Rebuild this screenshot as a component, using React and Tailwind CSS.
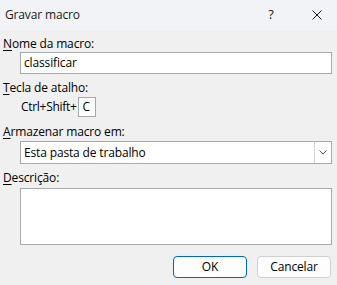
import React from 'react'

const Label = ({ first, rest, className = '' }) => (
  <div className={`pl-[3px] h-[16px] leading-[16px] text-[12px] text-[#000] ${className}`}>
    <span className="underline underline-offset-[2px]">{first}</span>{rest}
  </div>
)

const GravarMacro = () => {
  return (
    <div className="w-[337px] h-[285px] bg-[#f0f0f0] flex flex-col overflow-hidden [font-family:'Open_Sans',sans-serif] tracking-[-0.15px]">
      {/* title bar */}
      <div className="h-[30px] bg-[#f2f3f6] flex items-center shrink-0">
        <span className="pl-[5px] text-[12px] text-[#1a1a1a]">Gravar macro</span>
        <span className="ml-auto w-[12px] text-center text-[13px] text-[#222] mr-[35px]">?</span>
        <svg width="10" height="10" viewBox="0 0 10 10" className="mr-[15px]">
          <path d="M0.5 0.5 L9.5 9.5 M9.5 0.5 L0.5 9.5" stroke="#1a1a1a" strokeWidth="1" />
        </svg>
      </div>

      <div className="flex flex-col">
        <Label first="N" rest="ome da macro:" className="mt-[6px]" />
        <div className="ml-[20px] w-[312px] h-[22px] bg-white border border-[#a8a8a8] flex items-center pl-[3px] text-[12px] text-black">
          classificar
        </div>

        <Label first="T" rest="ecla de atalho:" className="mt-[6px]" />
        <div className="flex items-center ml-[21px] mt-[1px] h-[20px]">
          <span className="text-[12px] text-black tracking-[-0.3px]">Ctrl+Shift+</span>
          <div className="ml-[2px] w-[18px] h-[20px] bg-white border border-[#a8a8a8] flex items-center pl-[3px] text-[12px] text-black">C</div>
        </div>

        <Label first="A" rest="rmazenar macro em:" className="mt-[7px]" />
        <div className="ml-[20px] mt-[1px] w-[312px] h-[23px] bg-white border border-[#a8a8a8] flex items-center text-[12px] text-black">
          <span className="pl-[3px]">Esta pasta de trabalho</span>
          <div className="ml-auto h-full w-[17px] border-l border-[#d4d4d4] flex items-center justify-center">
            <svg width="8" height="5" viewBox="0 0 8 5">
              <path d="M0.5 0.5 L4 4 L7.5 0.5" stroke="#555" strokeWidth="1" fill="none" />
            </svg>
          </div>
        </div>

        <Label first="D" rest="escrição:" className="mt-[6px]" />
        <div className="ml-[20px] mt-[2px] w-[312px] h-[57px] bg-white border border-[#a8a8a8]" />

        <div className="flex justify-end gap-[10px] mt-[11px] mr-[6px]">
          <button className="w-[74px] h-[22px] rounded-[4px] bg-[#fdfdfd] border border-[#0067c0] text-[12px] text-black">OK</button>
          <button className="w-[74px] h-[22px] rounded-[4px] bg-[#fdfdfd] border border-[#d0d0d0] text-[12px] text-black">Cancelar</button>
        </div>
      </div>
    </div>
  )
}

export default function App() {
  return <GravarMacro />
}
